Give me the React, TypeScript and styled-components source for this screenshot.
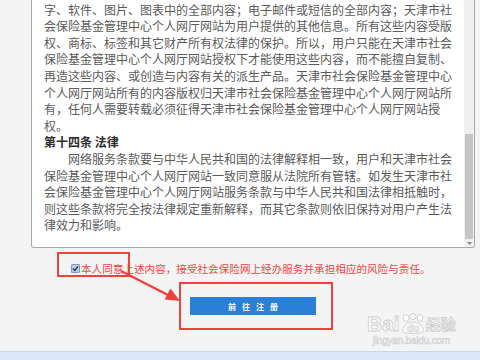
import React from "react";
import styled, { createGlobalStyle } from "styled-components";

const Global = createGlobalStyle`
  html, body { margin: 0; padding: 0; background: #f4f4f4; overflow: hidden; }
  #root { width: 480px; height: 360px; }
`;

const Page = styled.div`
  position: relative;
  width: 480px;
  height: 360px;
  display: flex;
  flex-direction: column;
  background: #f4f4f4;
  font-family: "Noto Sans CJK SC", "Noto Sans", sans-serif;
  overflow: hidden;
`;

const Panel = styled.div`
  box-sizing: border-box;
  margin: -4px 0 0 31px;
  width: 444px;
  height: 252px;
  display: flex;
  background: #fff;
  border: 1px solid #a8a8a8;
  border-top: none;
  border-radius: 0 0 3px 3px;
  overflow: hidden;
`;

const Content = styled.div`
  flex: 1;
  padding: 5.7px 10px 0 12px;
  font-size: 12px;
  line-height: 16.6px;
  color: #5a5a5a;
  line-break: strict;
`;

const Para = styled.p<{ $indent?: boolean }>`
  margin: 0;
  text-indent: ${(p) => (p.$indent ? "24px" : "0")};
`;

const Heading = styled.p`
  margin: 0;
  font-weight: bold;
  color: #2e2e2e;
`;

const ScrollBar = styled.div`
  width: 10px;
  display: flex;
  flex-direction: column;
  background: #f0f0f0;
`;

const Track = styled.div`
  flex: 1;
`;

const Thumb = styled.div`
  height: 105px;
  margin: 0 1px;
  background: #c6c6c6;
`;

const ArrowBtn = styled.div`
  height: 8px;
  display: flex;
  align-items: center;
  justify-content: center;
`;

const AgreeRow = styled.div`
  margin: 12px 0 0 71px;
  height: 16px;
  display: flex;
  align-items: center;
`;

const Check = styled.span`
  box-sizing: border-box;
  width: 9px;
  height: 9px;
  border: 1px solid #7f9cc4;
  background: #b9cbe4;
  border-radius: 1px;
  display: flex;
  align-items: center;
  justify-content: center;
`;

const AgreeText = styled.span`
  margin-left: 1px;
  font-size: 10.6px;
  color: #f24444;
  white-space: nowrap;
`;

const ButtonRow = styled.div`
  margin: 21px 0 0 31px;
  width: 444px;
  display: flex;
  justify-content: center;
`;

const Button = styled.div`
  width: 126px;
  height: 18px;
  background: #2a7fd6;
  color: #fff;
  font-size: 8px;
  font-weight: bold;
  letter-spacing: 6px;
  padding-left: 6px;
  box-sizing: border-box;
  display: flex;
  align-items: center;
  justify-content: center;
`;

const Spacer = styled.div`
  flex: 1;
`;

const Footer = styled.div`
  height: 8px;
  background: #dde9f8;
  border-top: 1px solid #c7d8ec;
`;

const Mark = styled.div<{ $x: number; $y: number; $w: number; $h: number }>`
  position: absolute;
  left: ${(p) => p.$x}px;
  top: ${(p) => p.$y}px;
  width: ${(p) => p.$w}px;
  height: ${(p) => p.$h}px;
  box-sizing: border-box;
  border: 2px solid #f2403f;
`;

const Overlay = styled.svg`
  position: absolute;
  left: 0;
  top: 0;
  pointer-events: none;
`;

const Watermark = styled.div`
  position: absolute;
  left: 367px;
  top: 313px;
  display: flex;
  flex-direction: column;
  align-items: center;
  color: #fafafa;
  -webkit-text-stroke: 0.8px #cfcfcf;
  font-family: "Liberation Sans", sans-serif;
`;

const LogoLine = styled.div`
  display: flex;
  align-items: center;
  height: 22px;
  font-size: 21px;
  font-weight: bold;
  line-height: 22px;
`;

const LogoCn = styled.span`
  font-family: "Noto Sans CJK SC", sans-serif;
  font-size: 15px;
  font-weight: bold;
`;

const LogoUrl = styled.div`
  font-size: 10px;
  line-height: 11px;
  -webkit-text-stroke: 0.6px #d0d0d0;
  letter-spacing: -0.2px;
`;

export default function App() {
  return (
    <Page>
      <Global />
      <Panel>
        <Content>
          <Para>
            字、软件、图片、图表中的全部内容；电子邮件或短信的全部内容；天津市社会保险基金管理中心个人网厅网站为用户提供的其他信息。所有这些内容受版权、商标、标签和其它财产所有权法律的保护。所以，用户只能在天津市社会保险基金管理中心个人网厅网站授权下才能使用这些内容，而不能擅自复制、再造这些内容、或创造与内容有关的派生产品。天津市社会保险基金管理中心个人网厅网站所有的内容版权归天津市社会保险基金管理中心个人网厅网站所有，任何人需要转载必须征得天津市社会保险基金管理中心个人网厅网站授权。
          </Para>
          <Heading>第十四条 法律</Heading>
          <Para $indent>
            网络服务条款要与中华人民共和国的法律解释相一致，用户和天津市社会保险基金管理中心个人网厅网站一致同意服从法院所有管辖。如发生天津市社会保险基金管理中心个人网厅网站服务条款与中华人民共和国法律相抵触时，则这些条款将完全按法律规定重新解释，而其它条款则依旧保持对用户产生法律效力和影响。
          </Para>
        </Content>
        <ScrollBar>
          <Track />
          <Thumb />
          <ArrowBtn>
            <svg width="5" height="3" viewBox="0 0 5 3">
              <path d="M0 0 H5 L2.5 3 Z" fill="#8a8a8a" />
            </svg>
          </ArrowBtn>
        </ScrollBar>
      </Panel>
      <AgreeRow>
        <Check>
          <svg width="7" height="7" viewBox="0 0 7 7">
            <path d="M1 3.6 L2.8 5.4 L6 1.4" fill="none" stroke="#2b3548" strokeWidth="1.4" />
          </svg>
        </Check>
        <AgreeText>本人同意上述内容，接受社会保险网上经办服务并承担相应的风险与责任。</AgreeText>
      </AgreeRow>
      <ButtonRow>
        <Button>前往注册</Button>
      </ButtonRow>
      <Spacer />
      <Footer />

      <Mark $x={57} $y={252} $w={73} $h={25} />
      <Mark $x={179} $y={282} $w={154} $h={48} />
      <Overlay width="480" height="360" viewBox="0 0 480 360">
        <line x1="121" y1="271" x2="168" y2="295" stroke="#f2403f" strokeWidth="2.5" />
        <path d="M180 301 L164.5 299.5 L170.5 288.5 Z" fill="#f2403f" />
      </Overlay>

      <Watermark>
        <LogoLine>
          <span>Bai</span>
          <svg width="26" height="22" viewBox="0 0 26 22">
            <g fill="#fafafa" stroke="#cfcfcf" strokeWidth="0.9">
              <ellipse cx="6" cy="5" rx="3" ry="3.5" />
              <ellipse cx="13" cy="3.5" rx="3" ry="3.2" />
              <ellipse cx="20" cy="5" rx="3" ry="3.5" />
              <path d="M3 19 C1 14, 7 9, 13 9 C19 9, 25 14, 23 19 C22 21, 4 21, 3 19 Z" />
            </g>
            <text x="13" y="19" textAnchor="middle" fontSize="10" fontWeight="bold" fontFamily="Liberation Sans" fill="#fafafa" stroke="#cfcfcf" strokeWidth="0.6">du</text>
          </svg>
          <LogoCn>经验</LogoCn>
        </LogoLine>
        <LogoUrl>jingyan.baidu.com</LogoUrl>
      </Watermark>
    </Page>
  );
}
